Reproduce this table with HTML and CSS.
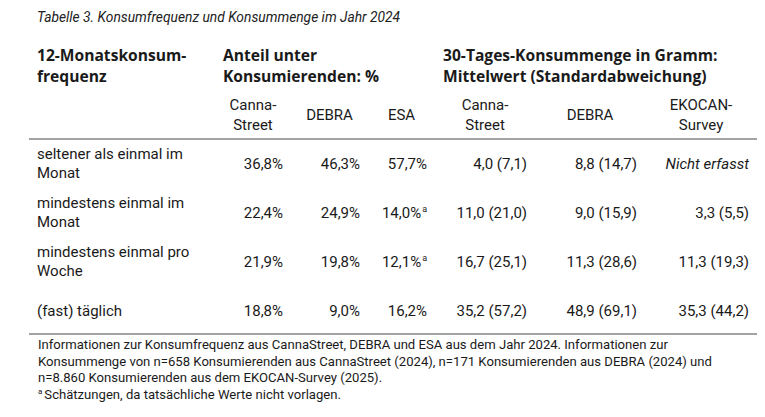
FILE: index.html
```html
<!DOCTYPE html>
<html lang="de">
<head>
<meta charset="utf-8">
<title>Tabelle 3</title>
<link rel="stylesheet" href="styles.css">
</head>
<body>
<div class="page">
  <div class="caption">Tabelle 3. Konsumfrequenz und Konsummenge im Jahr 2024</div>
  <table class="tbl">
    <colgroup>
      <col class="c1"><col class="c2"><col class="c3"><col class="c4"><col class="c5"><col class="c6"><col class="c7">
    </colgroup>
    <thead>
      <tr class="group">
        <th class="left">12-Monatskonsum-<br>frequenz</th>
        <th colspan="3" class="left">Anteil unter<br>Konsumierenden: %</th>
        <th colspan="3" class="left">30-Tages-Konsummenge in Gramm:<br>Mittelwert (Standardabweichung)</th>
      </tr>
      <tr class="sub">
        <th></th>
        <th>Canna-<br>Street</th>
        <th>DEBRA</th>
        <th>ESA</th>
        <th>Canna-<br>Street</th>
        <th>DEBRA</th>
        <th>EKOCAN-<br>Survey</th>
      </tr>
    </thead>
    <tbody>
      <tr>
        <td class="label">seltener als einmal im<br>Monat</td>
        <td>36,8%</td><td>46,3%</td><td>57,7%</td>
        <td>4,0 (7,1)</td><td>8,8 (14,7)</td><td class="it">Nicht erfasst</td>
      </tr>
      <tr>
        <td class="label">mindestens einmal im<br>Monat</td>
        <td>22,4%</td><td>24,9%</td><td>14,0%<sup>a</sup></td>
        <td>11,0 (21,0)</td><td>9,0 (15,9)</td><td>3,3 (5,5)</td>
      </tr>
      <tr>
        <td class="label">mindestens einmal pro<br>Woche</td>
        <td>21,9%</td><td>19,8%</td><td>12,1%<sup>a</sup></td>
        <td>16,7 (25,1)</td><td>11,3 (28,6)</td><td>11,3 (19,3)</td>
      </tr>
      <tr class="last">
        <td class="label">(fast) täglich</td>
        <td>18,8%</td><td>9,0%</td><td>16,2%</td>
        <td>35,2 (57,2)</td><td>48,9 (69,1)</td><td>35,3 (44,2)</td>
      </tr>
    </tbody>
  </table>
  <div class="notes">
    <p>Informationen zur Konsumfrequenz aus CannaStreet, DEBRA und ESA aus dem Jahr 2024. Informationen zur<br>Konsummenge von n=658 Konsumierenden aus CannaStreet (2024), n=171 Konsumierenden aus DEBRA (2024) und<br>n=8.860 Konsumierenden aus dem EKOCAN-Survey (2025).</p>
    <p><sup>a</sup>Schätzungen, da tatsächliche Werte nicht vorlagen.</p>
  </div>
</div>
</body>
</html>
```

FILE: styles.css
```css
html, body {
  margin: 0;
  padding: 0;
  background: #ffffff;
}

body {
  font-family: Roboto, "Liberation Sans", sans-serif;
  color: #1a1a1a;
}

.page {
  padding: 7px 0 0 29px;
}

.caption {
  margin-left: 8px;
  font-style: italic;
  font-size: 13.8px;
  line-height: 20px;
  color: #222;
}

.tbl {
  margin-top: 18px;
  width: 728px;
  border-collapse: collapse;
  table-layout: fixed;
}

.c1 { width: 186px; }
.c2 { width: 76px; }
.c3 { width: 77px; }
.c4 { width: 67px; }
.c5 { width: 100px; }
.c6 { width: 110px; }
.c7 { width: 112px; }

.tbl th, .tbl td {
  padding: 0 8px;
  font-size: 15px;
}

.group th {
  font-family: "Open Sans", Roboto, sans-serif;
  font-weight: 700;
  font-size: 15.6px;
  line-height: 21px;
  vertical-align: top;
  white-space: nowrap;
}

.left { text-align: left; }

.sub th {
  font-weight: 400;
  text-align: center;
  line-height: 20px;
  vertical-align: middle;
  padding-top: 8px;
  padding-bottom: 3px;
  border-bottom: 2px solid #a3a3a3;
}

.tbl td {
  text-align: right;
  line-height: 19px;
  padding-top: 5px;
  padding-bottom: 6px;
  vertical-align: middle;
  white-space: nowrap;
}

.tbl td.label {
  text-align: left;
}

.tbl tr.last td {
  padding-top: 15px;
  padding-bottom: 12px;
  border-bottom: 2px solid #a3a3a3;
}

.it { font-style: italic; }

sup {
  font-size: 9px;
  line-height: 0;
  vertical-align: 6px;
  margin-left: 1px;
}

.notes {
  padding: 2px 0 0 9px;
  font-size: 13.1px;
  line-height: 16.5px;
}

.notes p { margin: 0; }

.notes sup {
  margin-left: 0;
  margin-right: 2px;
  vertical-align: 5px;
  font-size: 8px;
}
```
